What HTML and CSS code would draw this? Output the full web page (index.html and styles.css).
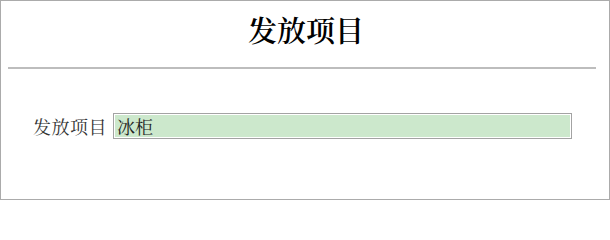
FILE: index.html
```html
<!DOCTYPE html>
<html lang="zh">
<head>
<meta charset="utf-8">
<title>发放项目</title>
<link rel="stylesheet" href="styles.css">
</head>
<body>
<div class="page">
  <h1 class="title">发放项目</h1>
  <div class="rule"></div>
  <div class="row">
    <label class="label" for="item">发放项目</label>
    <input class="field" id="item" type="text" value="冰柜">
  </div>
</div>
</body>
</html>
```
FILE: styles.css
```css
html, body {
  margin: 0;
  padding: 0;
  background: #fff;
}
.page {
  box-sizing: border-box;
  width: 610px;
  height: 200px;
  border: 1px solid #ababab;
  font-family: "Noto Serif CJK SC", "Noto Sans CJK SC", serif;
  color: #000;
}
.title {
  margin: 9px 0 0;
  font-size: 29px;
  line-height: 40px;
  font-weight: 600;
  text-align: center;
  padding-left: 2px;
}
.rule {
  height: 2px;
  background: #bdbdbd;
  margin: 17px 13px 0 7px;
}
.row {
  display: flex;
  align-items: center;
  margin-top: 44px;
  padding-left: 32px;
  gap: 6px;
}
.label {
  font-size: 18px;
  line-height: 26px;
  color: #333;
  letter-spacing: 0.5px;
}
.field {
  box-sizing: border-box;
  width: 459px;
  height: 26px;
  border: 1px solid #a3a3a3;
  box-shadow: inset 0 0 0 1px #fff;
  background: #cce8cc;
  font-family: "Noto Serif CJK SC", "Noto Sans CJK SC", serif;
  font-size: 18px;
  color: #222;
  padding: 0 3px;
  outline: none;
}
```
